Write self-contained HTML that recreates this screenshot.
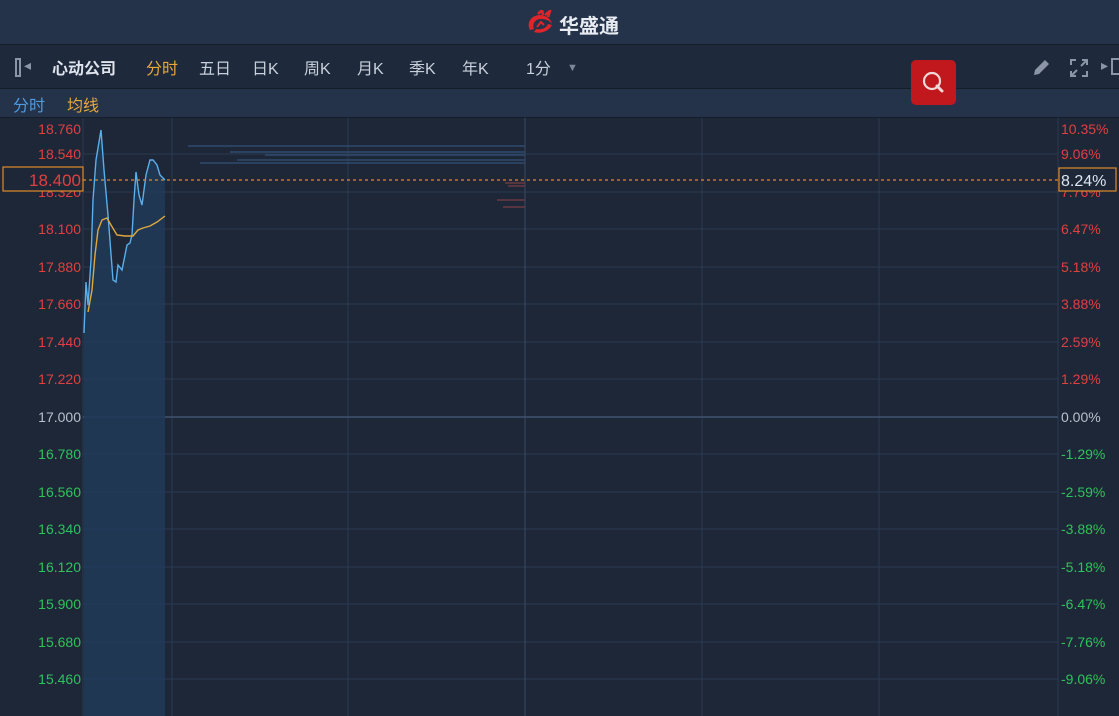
<!DOCTYPE html>
<html><head><meta charset="utf-8"><style>
body{margin:0;width:1119px;height:716px;overflow:hidden;background:#1d2738;font-family:"Liberation Sans","Noto Sans CJK SC",sans-serif;position:relative}
.hdr{position:absolute;left:0;top:0;width:1119px;height:44px;background:#243349;border-bottom:1px solid #151d29}
.tb{position:absolute;left:0;top:45px;width:1119px;height:43px;background:#1e2a3b;border-bottom:1px solid #151d29}
.sb{position:absolute;left:0;top:89px;width:1119px;height:28px;background:#243349;border-bottom:1px solid #151d29}
.t{position:absolute;white-space:nowrap}
</style></head><body>
<div class="hdr">
<svg class="t" style="left:526px;top:10px" width="30" height="26" viewBox="0 0 30 26"><path d="M4 20 C0 12 6 5 14 5 C20 5 25 9 26 14 C24 11 20 9 15 9 C9 9 6 14 8 19 Z" fill="#e0252a"/><path d="M12 4 L16 0 L17 5 M19 5 L24 1 L22 7" stroke="#e0252a" stroke-width="2.5" fill="none"/><path d="M8 22 C14 24 22 22 26 15 L22 14 C20 19 14 20 10 19Z" fill="#e0252a"/><path d="M11 17 L15 12 L18 15" stroke="#e0252a" stroke-width="2" fill="none"/></svg>
<div class="t" style="left:559px;top:10px;font-size:20px;font-weight:bold;color:#e8ecf2">华盛通</div>
</div>
<div class="tb">
<div class="t" style="left:15px;top:13px;width:6px;height:19px;border:2px solid #8b95a5;box-sizing:border-box"></div>
<div class="t" style="left:24px;top:12px;font-size:14px;color:#8b95a5">◂</div>
<div class="t" style="left:52px;top:10px;font-size:16px;font-weight:bold;color:#dfe5ee">心动公司</div>
<div class="t" style="left:146px;top:10px;font-size:16px;color:#e8a83a">分时</div>
<div class="t" style="left:199px;top:10px;font-size:16px;color:#c8d0dc">五日</div>
<div class="t" style="left:252px;top:10px;font-size:16px;color:#c8d0dc">日K</div>
<div class="t" style="left:304px;top:10px;font-size:16px;color:#c8d0dc">周K</div>
<div class="t" style="left:357px;top:10px;font-size:16px;color:#c8d0dc">月K</div>
<div class="t" style="left:409px;top:10px;font-size:16px;color:#c8d0dc">季K</div>
<div class="t" style="left:462px;top:10px;font-size:16px;color:#c8d0dc">年K</div>
<div class="t" style="left:526px;top:10px;font-size:16px;color:#c8d0dc">1分</div>
<div class="t" style="left:567px;top:17px;font-size:11px;color:#7d8797">▼</div>
<svg class="t" style="left:1030px;top:12px" width="22" height="20" viewBox="0 0 22 20"><path d="M4 18 L5 13 L15 3 L19 7 L9 17 Z" fill="#8b95a5"/></svg>
<svg class="t" style="left:1069px;top:13px" width="20" height="20" viewBox="0 0 20 20" stroke="#8b95a5" stroke-width="2" fill="none"><path d="M2 7V2h5M13 2h5v5M18 13v5h-5M7 18H2v-5M3 17l5-5M17 3l-5 5"/></svg>
<div class="t" style="left:1101px;top:12px;font-size:14px;color:#8b95a5">▸</div>
<div class="t" style="left:1111px;top:13px;width:10px;height:17px;border:2px solid #8b95a5;box-sizing:border-box"></div>
</div>
<div class="sb">
<div class="t" style="left:13px;top:3px;font-size:16px;color:#4c9be0">分时</div>
<div class="t" style="left:67px;top:3px;font-size:16px;color:#e8a83a">均线</div>
</div>
<div class="t" style="left:911px;top:60px;width:45px;height:45px;background:#c0181d;border-radius:5px;z-index:5">
<svg style="position:absolute;left:7px;top:7px" width="32" height="32" viewBox="0 0 32 32"><circle cx="14" cy="14" r="8" stroke="#f0d8d8" stroke-width="2.2" fill="none"/><path d="M19 19 L24 24" stroke="#f0d8d8" stroke-width="3" stroke-linecap="round"/></svg>
</div>
<svg class="t" style="left:0;top:118px" width="1119" height="598" viewBox="0 118 1119 598">
<g stroke="#2c3a50" stroke-width="1">
<line x1="83" y1="154" x2="1058" y2="154"/><line x1="83" y1="192" x2="1058" y2="192"/><line x1="83" y1="229" x2="1058" y2="229"/><line x1="83" y1="267" x2="1058" y2="267"/><line x1="83" y1="304" x2="1058" y2="304"/><line x1="83" y1="342" x2="1058" y2="342"/><line x1="83" y1="379" x2="1058" y2="379"/><line x1="83" y1="454" x2="1058" y2="454"/><line x1="83" y1="492" x2="1058" y2="492"/><line x1="83" y1="529" x2="1058" y2="529"/><line x1="83" y1="567" x2="1058" y2="567"/><line x1="83" y1="604" x2="1058" y2="604"/><line x1="83" y1="642" x2="1058" y2="642"/><line x1="83" y1="679" x2="1058" y2="679"/>
<line x1="83" y1="118" x2="83" y2="716"/><line x1="172" y1="118" x2="172" y2="716"/><line x1="348" y1="118" x2="348" y2="716"/><line x1="702" y1="118" x2="702" y2="716"/><line x1="879" y1="118" x2="879" y2="716"/><line x1="1058" y1="118" x2="1058" y2="716"/>
</g>
<line x1="525" y1="118" x2="525" y2="716" stroke="#3a4a62"/>
<line x1="83" y1="417" x2="1058" y2="417" stroke="#3f5470" stroke-width="1.5"/>
<g stroke="#2f4a6e" stroke-width="1.5"><line x1="188" y1="146" x2="525" y2="146"/><line x1="230" y1="152" x2="525" y2="152"/><line x1="265" y1="155" x2="525" y2="155"/><line x1="237" y1="160" x2="525" y2="160"/><line x1="200" y1="163" x2="525" y2="163"/></g>
<g stroke="#6a3a44" stroke-width="1.5"><line x1="505" y1="183" x2="525" y2="183"/><line x1="508" y1="186" x2="525" y2="186"/><line x1="497" y1="200" x2="525" y2="200"/><line x1="503" y1="207" x2="525" y2="207"/></g>
<path d="M84 333 L86 282 L88 305 L91 260 L93 200 L96 160 L101 130 L104 170 L108 215 L113 280 L116 282 L118 265 L122 270 L127 245 L130 243 L132 235 L134 200 L136 172 L139 195 L142 205 L146 175 L150 160 L153 160 L157 165 L160 175 L165 180 L165 716 L84 716Z" fill="#213a58" opacity="0.9"/>
<path d="M84 333 L86 282 L88 305 L91 260 L93 200 L96 160 L101 130 L104 170 L108 215 L113 280 L116 282 L118 265 L122 270 L127 245 L130 243 L132 235 L134 200 L136 172 L139 195 L142 205 L146 175 L150 160 L153 160 L157 165 L160 175 L165 180" stroke="#5aaeea" stroke-width="1.4" fill="none"/>
<path d="M88 312 L92 290 L95 255 L98 230 L102 220 L107 218 L111 225 L117 235 L125 236 L133 236 L138 230 L143 228 L150 226 L157 222 L165 216" stroke="#e0a83c" stroke-width="1.4" fill="none"/>
<line x1="83" y1="180" x2="1058" y2="180" stroke="#e08a2a" stroke-width="1.2" stroke-dasharray="3,3"/>
<g font-family="Liberation Sans, sans-serif" font-size="14" text-anchor="end">
<g fill="#e04040"><text x="81" y="134">18.760</text><text x="81" y="159">18.540</text><text x="81" y="197">18.320</text><text x="81" y="234">18.100</text><text x="81" y="272">17.880</text><text x="81" y="309">17.660</text><text x="81" y="347">17.440</text><text x="81" y="384">17.220</text></g>
<text x="81" y="422" fill="#b8c0cc">17.000</text>
<g fill="#2fc25b"><text x="81" y="459">16.780</text><text x="81" y="497">16.560</text><text x="81" y="534">16.340</text><text x="81" y="572">16.120</text><text x="81" y="609">15.900</text><text x="81" y="647">15.680</text><text x="81" y="684">15.460</text></g>
</g>
<g font-family="Liberation Sans, sans-serif" font-size="14">
<g fill="#e04040"><text x="1061" y="134">10.35%</text><text x="1061" y="159">9.06%</text><text x="1061" y="197">7.76%</text><text x="1061" y="234">6.47%</text><text x="1061" y="272">5.18%</text><text x="1061" y="309">3.88%</text><text x="1061" y="347">2.59%</text><text x="1061" y="384">1.29%</text></g>
<text x="1061" y="422" fill="#b8c0cc">0.00%</text>
<g fill="#2fc25b"><text x="1061" y="459">-1.29%</text><text x="1061" y="497">-2.59%</text><text x="1061" y="534">-3.88%</text><text x="1061" y="572">-5.18%</text><text x="1061" y="609">-6.47%</text><text x="1061" y="647">-7.76%</text><text x="1061" y="684">-9.06%</text></g>
</g>
<rect x="3" y="167" width="80" height="24" fill="#1d2738" stroke="#e08a2a" stroke-width="1.2"/>
<text x="81" y="186" font-family="Liberation Sans, sans-serif" font-size="17" fill="#e04040" text-anchor="end">18.400</text>
<rect x="1059" y="168" width="57" height="23" fill="#1d2738" stroke="#e08a2a" stroke-width="1.2"/>
<text x="1061" y="186" font-family="Liberation Sans, sans-serif" font-size="16" fill="#dce6f0">8.24%</text>
</svg>
</body></html>
